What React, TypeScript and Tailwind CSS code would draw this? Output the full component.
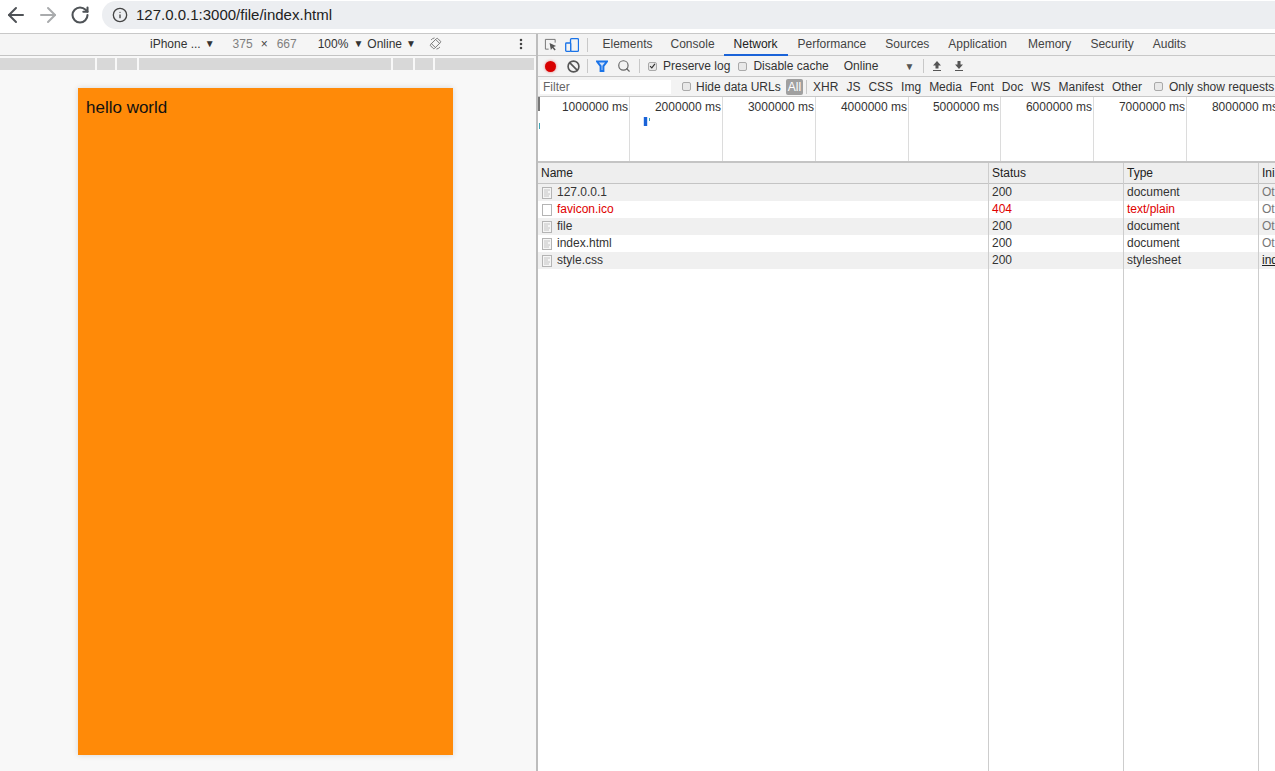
import { ArrowLeft, ArrowRight, RotateCw, Info, Search, Ban, MoreVertical } from 'lucide-react';

const tabs = ['Elements', 'Console', 'Network', 'Performance', 'Sources', 'Application', 'Memory', 'Security', 'Audits'];
const kinds = ['XHR', 'JS', 'CSS', 'Img', 'Media', 'Font', 'Doc', 'WS', 'Manifest', 'Other'];
const ticks = ['1000000', '2000000', '3000000', '4000000', '5000000', '6000000', '7000000', '8000000'];

const rows = [
  { name: '127.0.0.1', status: '200', type: 'document', init: 'Ot' },
  { name: 'favicon.ico', status: '404', type: 'text/plain', init: 'Ot', failed: true },
  { name: 'file', status: '200', type: 'document', init: 'Ot' },
  { name: 'index.html', status: '200', type: 'document', init: 'Ot' },
  { name: 'style.css', status: '200', type: 'stylesheet', init: 'ind', link: true },
];

function tabPadding(tab: string) {
  if (tab === 'Elements') return 'pl-[9.5px] pr-[8.5px]';
  if (tab === 'Network') return 'pl-[9.5px] pr-[10.5px]';
  if (tab === 'Application') return 'pl-[9.5px] pr-[11.5px]';
  return 'px-[9.5px]';
}

function CheckBox({ checked }: { checked?: boolean }) {
  return (
    <span className="flex h-[9px] w-[9px] items-center justify-center rounded-[2px] border border-[#a9a9a9] bg-[#e8e8e8]">
      {checked && (
        <svg viewBox="0 0 8 8" className="h-[8px] w-[8px]">
          <path d="M1.2 4.2 L3.2 6.2 L6.8 1.6" fill="none" stroke="#333" strokeWidth="1.3" />
        </svg>
      )}
    </span>
  );
}

function Divider() {
  return <span className="block h-[14px] w-px bg-[#c8c8c8]" />;
}

function DocIcon({ blank }: { blank?: boolean }) {
  return (
    <svg viewBox="0 0 10 12" className="ml-px mt-[3px] h-[12px] w-[10px] shrink-0">
      <rect x="0.5" y="0.5" width="9" height="11" fill={blank ? '#fff' : '#f5f5f5'} stroke="#b4b4b4" />
      {!blank && <path d="M2 3h6M2 5h4M2 7h6M2 9h5" stroke="#c4c4c4" strokeWidth="1" />}
    </svg>
  );
}

function Column({ title, width, children }: { title: string; width: string; children: React.ReactNode }) {
  return (
    <div className={`flex shrink-0 flex-col border-r border-[#cdcdcd] ${width}`}>
      <div className="flex h-[21px] items-center border-b border-[#c4c4c4] bg-[#eeeeee] pl-[3px] text-[#222]">{title}</div>
      {children}
    </div>
  );
}

function Cell({ index, children, className }: { index: number; children: React.ReactNode; className?: string }) {
  return (
    <div className={`flex h-[17px] items-center gap-[5px] pb-[2px] pl-[3px] whitespace-nowrap ${index % 2 === 0 ? 'bg-[#f0f0f0]' : 'bg-white'} ${className ?? ''}`}>
      {children}
    </div>
  );
}

export default function App() {
  return (
    <div className="flex h-[771px] w-[1275px] flex-col overflow-hidden bg-white text-[12px] font-['Liberation_Sans',Arial,sans-serif] text-[#303030]">
      {/* browser bar */}
      <div className="flex h-[34px] shrink-0 items-center border-b border-[#c8c8c8] bg-white pb-[3px]">
        <ArrowLeft className="ml-[4px] h-[24px] w-[24px] text-[#4f5357]" strokeWidth={2} />
        <ArrowRight className="ml-[8px] h-[24px] w-[24px] text-[#a9abad]" strokeWidth={2} />
        <RotateCw className="ml-[10px] h-[20px] w-[20px] text-[#4f5357]" strokeWidth={2.5} />
        <div className="ml-[12px] flex h-[28px] flex-1 items-center rounded-l-full bg-[#eceef1] pl-[10px]">
          <Info className="h-[16px] w-[16px] text-[#444]" strokeWidth={2} />
          <span className="ml-[8px] text-[15px] text-[#222]">127.0.0.1:3000/file/index.html</span>
        </div>
      </div>

      <div className="flex min-h-0 flex-1">
        {/* device pane */}
        <div className="flex w-[536px] shrink-0 flex-col bg-[#f8f8f8]">
          <div className="flex h-[22px] shrink-0 items-center border-b border-[#c4c4c4] bg-[#f5f5f5] pb-[2px] text-[#333]">
            <span className="ml-[150px]">iPhone ...</span>
            <span className="ml-[4px] text-[10px]">▼</span>
            <span className="ml-[18px] text-[#808080]">375</span>
            <span className="ml-[8px] text-[#444]">×</span>
            <span className="ml-[9px] text-[#808080]">667</span>
            <span className="ml-[21px]">100%</span>
            <span className="ml-[5px] text-[10px]">▼</span>
            <span className="ml-[4px]">Online</span>
            <span className="ml-[4px] text-[10px]">▼</span>
            <svg viewBox="0 0 14 14" className="ml-[13px] h-[13px] w-[13px]">
              <g transform="rotate(45 7 7)" fill="none" stroke="#777" strokeWidth="1">
                <rect x="4" y="1.5" width="6" height="11" rx="1" />
                <path d="M4 3.8h6M4 10.2h6" />
              </g>
              <path d="M2.2 3.2A6 6 0 0 1 6 1M11.8 10.8A6 6 0 0 1 8 13" fill="none" stroke="#777" strokeWidth="1" />
            </svg>
            <MoreVertical className="ml-[72px] h-[14px] w-[14px] text-[#444]" strokeWidth={2.4} />
          </div>

          {/* ruler */}
          <div className="mt-[2px] flex h-[12px] w-[534px] shrink-0 gap-[2px]">
            <div className="w-[95px] bg-[#d8d8d8]" />
            <div className="w-[18px] bg-[#d8d8d8]" />
            <div className="w-[20px] bg-[#d8d8d8]" />
            <div className="w-[252px] bg-[#d8d8d8]" />
            <div className="w-[20px] bg-[#d8d8d8]" />
            <div className="w-[18px] bg-[#d8d8d8]" />
            <div className="flex-1 bg-[#d8d8d8]" />
          </div>

          <div className="ml-[78px] mt-[18px] h-[667px] w-[375px] bg-[#ff8a08] pl-[8px] pt-[8px] text-[17px] leading-[24px] text-[#111] shadow-[0_0_6px_rgba(0,0,0,0.14)]">
            hello world
          </div>
        </div>

        {/* devtools */}
        <div className="flex min-w-0 flex-1 flex-col border-l-2 border-[#bdbdbd]">
          <div className="flex h-[22px] shrink-0 items-center border-b border-[#c8c8c8] bg-[#f3f3f3]">
            <svg viewBox="0 0 14 14" className="ml-[6px] h-[13px] w-[13px]">
              <path d="M12 5V1.5H1.5V12H5" fill="none" stroke="#6e6e6e" strokeWidth="1" />
              <path d="M6 5.5 L13 8.5 L10.2 9.8 L12.6 12.4 L11.4 13.4 L9 10.8 L7.4 13 Z" fill="#555" />
            </svg>
            <svg viewBox="0 0 14 14" className="ml-[8px] h-[14px] w-[14px]">
              <rect x="5.5" y="0.7" width="8" height="12.6" rx="1" fill="none" stroke="#1a73e8" strokeWidth="1.3" />
              <rect x="0.7" y="5" width="5" height="8.3" rx="0.8" fill="#f3f3f3" stroke="#1a73e8" strokeWidth="1.3" />
            </svg>
            <span className="ml-[8px] mr-[5px] h-[14px] w-px bg-[#c8c8c8]" />
            <div className="flex h-full">
              {tabs.map((tab) => (
                <div
                  key={tab}
                  className={`-mb-px flex items-center border-b-2 pb-[1px] ${tabPadding(tab)} ${tab === 'Network' ? 'border-[#1a63d8] text-[#222]' : 'border-transparent text-[#444]'}`}
                >
                  {tab}
                </div>
              ))}
            </div>
          </div>

          <div className="flex h-[21px] shrink-0 items-center border-b border-[#c8c8c8] bg-[#f3f3f3]">
            <span className="ml-[7px] h-[11px] w-[11px] rounded-full bg-[#d80000] shadow-[0_0_3px_rgba(216,0,0,0.5)]" />
            <Ban className="ml-[11px] h-[13px] w-[13px] text-[#555]" strokeWidth={3} />
            <span className="ml-[7px]"><Divider /></span>
            <svg viewBox="0 0 12 12" className="ml-[8px] h-[12px] w-[12px]">
              <path d="M1 1.5h10L7.4 6.2V11H4.6V6.2Z" fill="#cfe0fa" stroke="#1a73e8" strokeWidth="2" />
            </svg>
            <Search className="ml-[9px] h-[14px] w-[14px] text-[#666]" strokeWidth={2} />
            <span className="ml-[8px]"><Divider /></span>
            <span className="ml-[8px]"><CheckBox checked /></span>
            <span className="ml-[6px] text-[#333]">Preserve log</span>
            <span className="ml-[8px]"><CheckBox /></span>
            <span className="ml-[6px] text-[#333]">Disable cache</span>
            <span className="ml-[15px] text-[#333]">Online</span>
            <span className="ml-[26px] text-[10px] text-[#555]">▼</span>
            <span className="ml-[9px]"><Divider /></span>
            <svg viewBox="0 0 12 12" className="ml-[7px] h-[12px] w-[12px]">
              <path d="M6 1 L10 5.5 H7.5 V8.5 H4.5 V5.5 H2 Z M2 10h8v1H2z" fill="#555" />
            </svg>
            <svg viewBox="0 0 12 12" className="ml-[10px] h-[12px] w-[12px]">
              <path d="M4.5 1h3v3.5H10L6 9 2 4.5h2.5Z M2 10h8v1H2z" fill="#555" />
            </svg>
          </div>

          <div className="flex h-[20px] shrink-0 items-center overflow-hidden whitespace-nowrap border-b border-[#c8c8c8] bg-[#f3f3f3]">
            <div className="ml-[2px] flex h-[14px] w-[131px] shrink-0 items-center bg-white pl-[3px] text-[#666]">Filter</div>
            <span className="ml-[11px]"><CheckBox /></span>
            <span className="ml-[5px] text-[#333]">Hide data URLs</span>
            <span className="ml-[5px] flex h-[16px] items-center rounded-[2px] bg-[#a0a0a0] px-[2px] text-white">All</span>
            <span className="ml-[3px] mr-[6px]"><Divider /></span>
            <div className="flex gap-[8px] text-[#333]">
              {kinds.map((kind) => (
                <span key={kind}>{kind}</span>
              ))}
            </div>
            <span className="ml-[12px]"><CheckBox /></span>
            <span className="ml-[6px] text-[#333]">Only show requests</span>
          </div>

          {/* overview */}
          <div className="relative flex h-[66px] shrink-0 overflow-hidden border-b-2 border-[#c4c4c4] bg-white text-[#333]">
            {ticks.map((tick, i) => (
              <div
                key={tick}
                className={`h-full shrink-0 border-r border-[#dcdcdc] pr-px pt-[1px] text-right whitespace-nowrap ${i === 0 || i === 4 ? 'w-[92px]' : 'w-[93px]'}`}
              >
                {tick} ms
              </div>
            ))}
            <span className="absolute left-0 top-0 h-[14px] w-[2px] bg-[#777]" />
            <span className="absolute left-[1px] top-[26px] h-[6px] w-px bg-[#3aa6b8]" />
            <span className="absolute left-[105px] top-[20px] h-[9px] w-[5px] border-x border-[#cfe0fa] bg-[#1a63d8]" />
            <span className="absolute left-[111px] top-[21px] h-[3px] w-px bg-[#3aa6b8]" />
          </div>

          {/* request table */}
          <div className="flex min-h-0 flex-1 overflow-hidden bg-white text-[#333]">
            <Column title="Name" width="w-[451px]">
              {rows.map((row, i) => (
                <Cell key={row.name} index={i} className={row.failed ? 'text-[#e00000]' : ''}>
                  <DocIcon blank={row.failed} />
                  <span>{row.name}</span>
                </Cell>
              ))}
            </Column>
            <Column title="Status" width="w-[135px]">
              {rows.map((row, i) => (
                <Cell key={row.name} index={i} className={row.failed ? 'text-[#e00000]' : ''}>{row.status}</Cell>
              ))}
            </Column>
            <Column title="Type" width="w-[135px]">
              {rows.map((row, i) => (
                <Cell key={row.name} index={i} className={row.failed ? 'text-[#e00000]' : ''}>{row.type}</Cell>
              ))}
            </Column>
            <Column title="Ini" width="w-[60px]">
              {rows.map((row, i) => (
                <Cell key={row.name} index={i} className={row.link ? 'text-[#222] underline' : 'text-[#777]'}>{row.init}</Cell>
              ))}
            </Column>
          </div>
        </div>
      </div>
    </div>
  );
}
